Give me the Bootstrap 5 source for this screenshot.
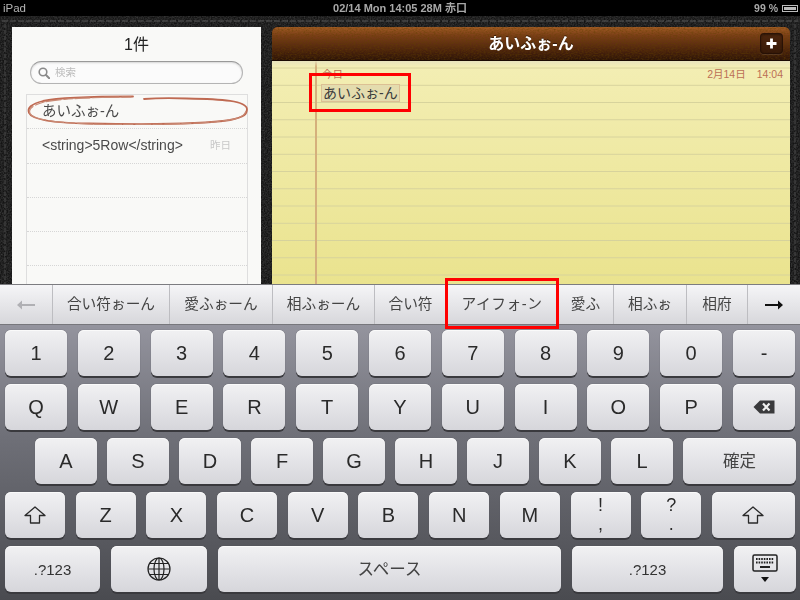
<!DOCTYPE html>
<html lang="ja">
<head>
<meta charset="utf-8">
<title>Notes</title>
<link href="https://cdn.jsdelivr.net/npm/bootstrap@5.3.0/dist/css/bootstrap.min.css" rel="stylesheet">
<style>
html,body{margin:0;width:800px;height:600px;overflow:hidden;background:#000}
body{font-family:"Liberation Sans","Noto Sans CJK JP",sans-serif}
.ipad{position:relative;width:800px;height:600px}
.statusbar,.listpane,.notepane,.candidates,.keyboard{filter:blur(.3px)}
.statusbar{height:16px;background:#000;color:#b4b4b4;font-size:11.5px;line-height:16px;padding:0 2px 0 3px}
.status-mid{position:absolute;left:0;right:0;top:0;text-align:center;font-weight:700;font-size:11px;color:#a8a8a8}
.batt-label{font-size:10.5px;font-weight:700;color:#a8a8a8}
.batt{width:16px;height:7px;border:1px solid #bbb;padding:1px}
.batt i{display:block;height:100%;background:#bbb}
.leather{height:268px;padding:11px 10px 0 12px;gap:11px;background-color:#141414;
 background-image:url("data:image/svg+xml,%3Csvg xmlns='http://www.w3.org/2000/svg' width='800' height='268'%3E%3Cfilter id='n'%3E%3CfeTurbulence type='fractalNoise' baseFrequency='.7' numOctaves='2'/%3E%3CfeColorMatrix values='0 0 0 0 .16 0 0 0 0 .16 0 0 0 0 .16 0 0 0 .7 -.2'/%3E%3C/filter%3E%3Crect width='800' height='268' filter='url(%23n)'/%3E%3Cpath d='M2 5H798' stroke='%23585858' stroke-width='1' stroke-dasharray='6 2' fill='none'/%3E%3Cpath d='M5 8V268M795 8V268' stroke='%233c3c3c' stroke-width='1.5' stroke-dasharray='4 2' fill='none'/%3E%3C/svg%3E")}
.listpane{width:249px;height:257px;background:#f9f9f7;overflow:hidden}
.pane-title{height:34px;line-height:36px;font-size:16px;color:#222;text-align:center}
.searchbox{height:23px;margin:0 18px 10px;border:1px solid #b4b4b4;border-top-color:#999;border-radius:12px;background:#fbfbfb;padding-left:7px;gap:5px;font-size:10.5px;color:#bcbcbc;box-shadow:inset 0 1px 2px rgba(0,0,0,.15)}
.notes{margin:0 13px 0 14px;border:solid #dedede;border-width:1px 1px 0;border-radius:0;background:transparent;position:relative}
.notes .list-group-item{height:34.3px;padding:0 16px 0 15px;background:transparent;border:0;border-bottom:1px dotted #d6d6d6;color:#4a4a4a;font-size:14px;line-height:33px}
.notes .note-jp{font-size:14.5px}
.note-day{font-size:10.5px;color:#c8c8c8}
.pencil{position:absolute;left:0;top:0;width:222px;height:34px;overflow:visible}
.notepane{flex:1;height:257px;overflow:hidden;border-radius:6px 6px 0 0;display:flex;flex-direction:column}
.noteheader{height:34px;flex:none;padding:0 7px 0 0;border-bottom:1px solid #1a0a02;color:#fff;font-size:16px;font-weight:700;position:relative;background-color:#5a2a0e;
 background-image:url("data:image/svg+xml,%3Csvg xmlns='http://www.w3.org/2000/svg' width='520' height='34'%3E%3Cfilter id='n'%3E%3CfeTurbulence type='fractalNoise' baseFrequency='.5 .8' numOctaves='3'/%3E%3CfeColorMatrix values='0 0 0 0 .12 0 0 0 0 .05 0 0 0 0 0 0 0 0 1.2 -.45'/%3E%3C/filter%3E%3Crect width='520' height='34' filter='url(%23n)'/%3E%3C/svg%3E"),linear-gradient(#a35c26,#7c3f18 25%,#4a220c 72%,#2c1307)}
.head-title{position:absolute;left:0;right:0;top:0;line-height:33px;text-align:center;text-shadow:0 -1px 0 rgba(0,0,0,.5)}
.addbtn{width:23px;height:21px;padding:0;border:1px solid rgba(35,15,5,.8);border-radius:4px;background:rgba(45,20,8,.6);box-shadow:inset 0 1px 2px rgba(0,0,0,.4),0 1px 0 rgba(255,255,255,.1)}
.addbtn:hover,.addbtn:active{background:rgba(45,20,8,.6)}
.notepage{flex:1;position:relative;padding-top:6px;
 background-image:linear-gradient(rgba(230,226,190,.9),rgba(230,226,190,0) 6px),linear-gradient(#d5b07c,#d5b07c),linear-gradient(to bottom,transparent 16.25px,#d6d29c 16.25px,#d6d29c 17.25px),linear-gradient(#f3eeb4,#eae38e);
 background-repeat:no-repeat,no-repeat,repeat-y,no-repeat;
 background-size:100% 7px,2px 100%,100% 17.25px,100% 100%;
 background-position:0 0,43px 0,0 7.5px,0 0}
.dateline{font-size:10.5px;color:#bb6f55;line-height:14px;padding:0 7px 0 50px}
.dateline .gapdate{margin-right:11px}
.mark-jp{display:inline-block;margin:3px 0 0 49px;padding:0 1px;height:18px;line-height:17px;font-size:14px;color:#3a3a3a;background:#e4dcae;border:1px solid #dcc094}
.candidates{height:41px;background:linear-gradient(#f5f5f7,#d7d7db);border-top:1px solid #7c7c80;border-bottom:1px solid #77777c;color:#444;font-size:14.7px}
.cand{height:100%;display:flex;align-items:center;justify-content:center;border-right:1px solid #bdbdc1;flex:none}
.c53{width:53px}.c117{width:117px}.c103{width:103px}.c102{width:102px}.c72{width:72px}.c111{width:111px;letter-spacing:.6px}.c56{width:56px}.c73{width:73px}.c61{width:61px}.c52{width:52px;border-right:0}
.keyboard{height:275px;padding:5px 5px 0;gap:8px;background:linear-gradient(#94949e,#6f7078 40%,#4a4b50)}
.keyrow{height:46px}
.btn.kk{height:46px;width:62px;flex:none;padding:0;border:0;border-radius:6px;color:#2a2a2a;font-size:20px;line-height:1;display:flex;align-items:center;justify-content:center;background:linear-gradient(#f1f1f3,#d6d6db);box-shadow:0 2px 0 #3a3a3e,0 0 1px #55555a,inset 0 1px 0 #fafafa}
.btn.kk:hover{background:linear-gradient(#f1f1f3,#d6d6db);color:#2a2a2a}
.kk.w60{width:60px}.kk.w83{width:83px}.kk.w113{width:113px}.kk.w95{width:95px}.kk.w96{width:96px}.kk.w343{width:343px}.kk.w151{width:151px}
.btn.kk.jp{font-size:16.5px;color:#444}
.btn.kk.sym{font-size:15px;color:#333}
.btn.kk.two{flex-direction:column;font-size:18px;line-height:19px}
.row3{padding-left:30px;gap:10px}
.row5{gap:11px}
.callout{position:absolute;border:3.5px solid #f00;pointer-events:none}
.call-a{left:309px;top:73px;width:102px;height:39px}
.call-b{left:445px;top:278px;width:114px;height:51px}
</style>
</head>
<body>
<div class="ipad d-flex flex-column">
  <div class="statusbar d-flex justify-content-between align-items-center position-relative">
    <span>iPad</span>
    <span class="status-mid">02/14 Mon 14:05 28M 赤口</span>
    <span class="d-flex align-items-center gap-1 position-relative batt-label">99 %<span class="batt"><i></i></span></span>
  </div>

  <div class="leather d-flex">
    <section class="listpane">
      <div class="pane-title">1件</div>
      <div class="searchbox d-flex align-items-center">
        <svg width="12" height="12" viewBox="0 0 12 12"><circle cx="5" cy="5" r="3.8" fill="none" stroke="#8a8a8a" stroke-width="1.6"/><path d="M8 8l3.2 3.2" stroke="#8a8a8a" stroke-width="2" stroke-linecap="round"/></svg>
        <span>検索</span>
      </div>
      <ul class="list-group notes">
        <li class="list-group-item note-jp">あいふぉ-ん</li>
        <li class="list-group-item d-flex justify-content-between"><span>&lt;string&gt;5Row&lt;/string&gt;</span><span class="note-day">昨日</span></li>
        <li class="list-group-item"></li>
        <li class="list-group-item"></li>
        <li class="list-group-item"></li>
        <li class="list-group-item"></li>
        <svg class="pencil" viewBox="0 0 222 34">
          <g fill="none" stroke="#bf6a52" stroke-linecap="round">
            <path d="M106 1.500C70 1.500 34 2 16 6 4 9 0 13 2 18c3 7 24 10 60 10.500 50 1 112 1 141-3.500 15-3 17-6 17-11C219 6 196 4 160 3.500 146 3 130 3 117 4" stroke-width="1.800"/>
            <path d="M104 2C70 2.500 36 3 17 7 6 10 1 14 3 18.500c3 6 24 9 60 10.500 50 1 110 .5 140-4 14-3 16-6 16-11" stroke-width="1.200" stroke="#c98a75" stroke-dasharray="9 3 15 2"/>
          </g>
        </svg>
      </ul>
    </section>

    <section class="notepane">
      <header class="noteheader d-flex justify-content-end align-items-center">
        <div class="head-title">あいふぉ-ん</div>
        <button class="btn addbtn d-flex align-items-center justify-content-center position-relative" type="button" aria-label="追加">
          <svg width="11" height="11" viewBox="0 0 11 11"><path d="M5.500 .5v10M.5 5.500h10" stroke="#fff" stroke-width="2.800"/></svg>
        </button>
      </header>
      <div class="notepage">
        <div class="dateline d-flex justify-content-between">
          <span>今日</span>
          <span><span class="gapdate">2月14日</span>14:04</span>
        </div>
        <div class="mark-jp">あいふぉ-ん</div>
      </div>
    </section>
  </div>

  <nav class="candidates d-flex">
    <div class="cand c53"><svg width="20" height="10" viewBox="0 0 20 10"><path d="M6 0.500L1 5l5 4.500V6h13V4H6z" fill="#b0b0b4"/></svg></div>
    <div class="cand c117">合い符ぉーん</div>
    <div class="cand c103">愛ふぉーん</div>
    <div class="cand c102">相ふぉーん</div>
    <div class="cand c72">合い符</div>
    <div class="cand c111">アイフォ-ン</div>
    <div class="cand c56">愛ふ</div>
    <div class="cand c73">相ふぉ</div>
    <div class="cand c61">相府</div>
    <div class="cand c52"><svg width="20" height="10" viewBox="0 0 20 10"><path d="M14 0.500L19 5l-5 4.500V6H1V4h13z" fill="#111"/></svg></div>
  </nav>

  <div class="keyboard d-flex flex-column">
    <div class="keyrow d-flex justify-content-between">
      <button class="btn kk">1</button><button class="btn kk">2</button><button class="btn kk">3</button><button class="btn kk">4</button><button class="btn kk">5</button><button class="btn kk">6</button><button class="btn kk">7</button><button class="btn kk">8</button><button class="btn kk">9</button><button class="btn kk">0</button><button class="btn kk">-</button>
    </div>
    <div class="keyrow d-flex justify-content-between">
      <button class="btn kk">Q</button><button class="btn kk">W</button><button class="btn kk">E</button><button class="btn kk">R</button><button class="btn kk">T</button><button class="btn kk">Y</button><button class="btn kk">U</button><button class="btn kk">I</button><button class="btn kk">O</button><button class="btn kk">P</button>
      <button class="btn kk" aria-label="削除"><svg width="22" height="14" viewBox="0 0 22 14"><path d="M7 0.500H21.500V13.500H7L0.500 7z" fill="#3a3a3c"/><path d="M10 3.500l6.500 7M16.500 3.500l-6.500 7" stroke="#f0f0f0" stroke-width="2.200"/></svg></button>
    </div>
    <div class="keyrow row3 d-flex">
      <button class="btn kk">A</button><button class="btn kk">S</button><button class="btn kk">D</button><button class="btn kk">F</button><button class="btn kk">G</button><button class="btn kk">H</button><button class="btn kk">J</button><button class="btn kk">K</button><button class="btn kk">L</button><button class="btn kk w113 jp">確定</button>
    </div>
    <div class="keyrow d-flex justify-content-between">
      <button class="btn kk w60" aria-label="シフト"><svg width="22" height="18" viewBox="0 0 22 18"><path d="M11 1L21 9.500H15.500V17H6.500V9.500H1z" fill="none" stroke="#2a2a2a" stroke-width="1.300" stroke-linejoin="round"/></svg></button>
      <button class="btn kk w60">Z</button><button class="btn kk w60">X</button><button class="btn kk w60">C</button><button class="btn kk w60">V</button><button class="btn kk w60">B</button><button class="btn kk w60">N</button><button class="btn kk w60">M</button>
      <button class="btn kk w60 two"><span>!</span><span>,</span></button>
      <button class="btn kk w60 two"><span>?</span><span>.</span></button>
      <button class="btn kk w83" aria-label="シフト"><svg width="22" height="18" viewBox="0 0 22 18"><path d="M11 1L21 9.500H15.500V17H6.500V9.500H1z" fill="none" stroke="#2a2a2a" stroke-width="1.300" stroke-linejoin="round"/></svg></button>
    </div>
    <div class="keyrow row5 d-flex">
      <button class="btn kk w95 sym">.?123</button>
      <button class="btn kk w96" aria-label="地球"><svg width="24" height="24" viewBox="0 0 24 24" fill="none" stroke="#222" stroke-width="1.200"><circle cx="12" cy="12" r="11"/><ellipse cx="12" cy="12" rx="5" ry="11"/><path d="M12 1V23M1 12H23M2.800 6.500H21.200M2.800 17.500H21.200"/></svg></button>
      <button class="btn kk w343 jp">スペース</button>
      <button class="btn kk w151 sym">.?123</button>
      <button class="btn kk" aria-label="キーボードを隠す"><svg width="26" height="30" viewBox="0 0 26 30"><rect x="1" y="1" width="24" height="16" rx="1.500" fill="none" stroke="#222" stroke-width="1.500"/><path d="M4 5h18M4 8.500h18" stroke="#222" stroke-width="2" stroke-dasharray="1.600 1"/><path d="M8 13h10" stroke="#222" stroke-width="2"/><path d="M9 23h8l-4 5z" fill="#111"/></svg></button>
    </div>
  </div>

  <div class="callout call-a"></div>
  <div class="callout call-b"></div>
</div>
<script src="https://cdn.jsdelivr.net/npm/bootstrap@5.3.0/dist/js/bootstrap.bundle.min.js"></script>
</body>
</html>
